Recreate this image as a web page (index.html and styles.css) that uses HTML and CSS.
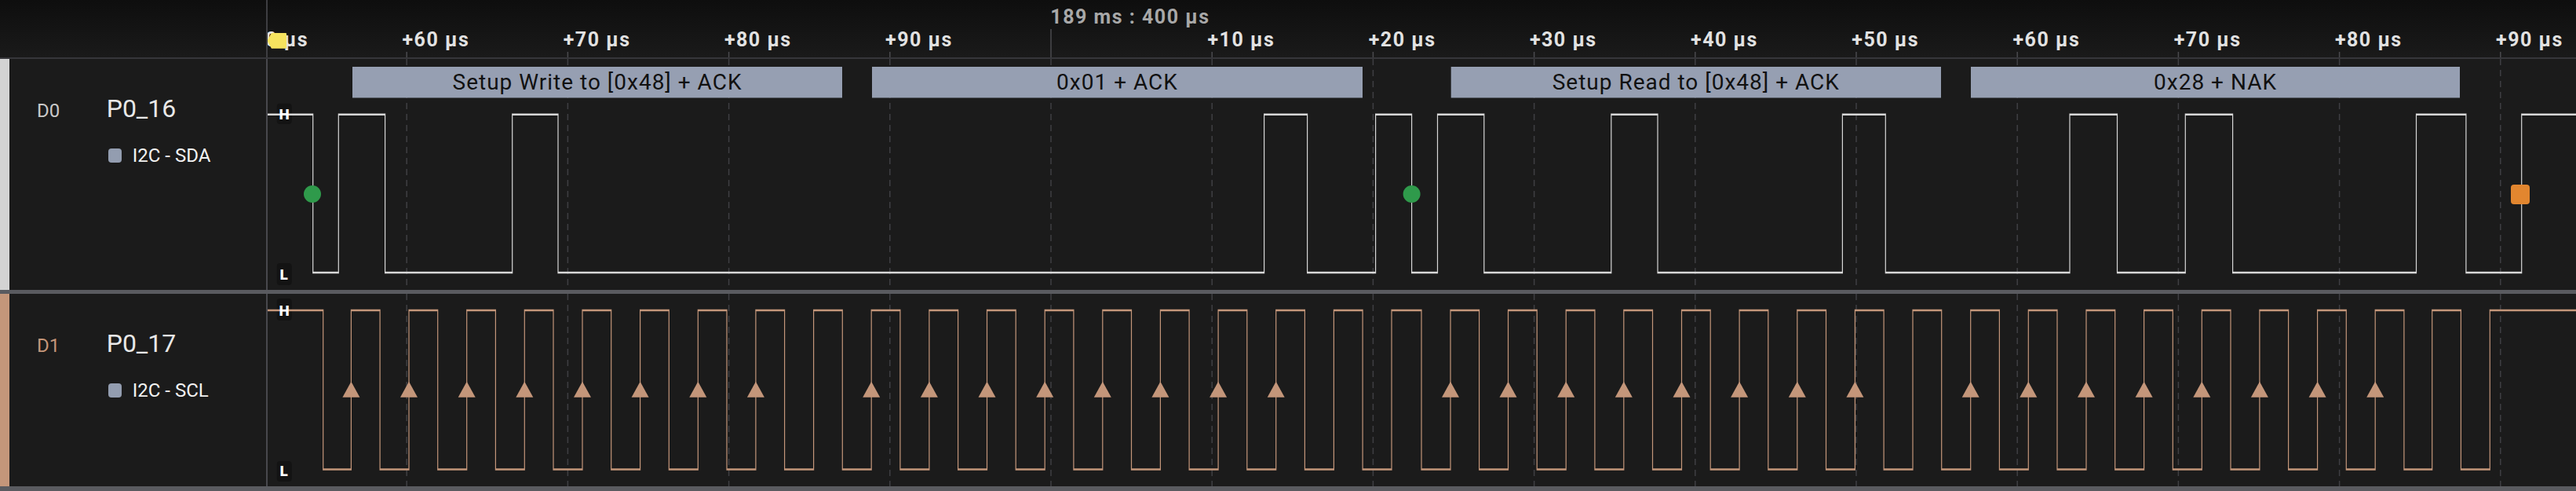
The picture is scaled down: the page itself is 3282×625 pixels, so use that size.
FILE: index.html
```html
<!DOCTYPE html>
<html lang="en">
<head>
<meta charset="utf-8">
<title>Logic analyzer – I2C</title>
<link rel="stylesheet" href="styles.css">
</head>
<body>
<div class="scope">
  <div class="header">
    <div class="corner"></div>
    <svg class="ruler" width="2941" height="73" viewBox="341 0 2941 73">
      <path class="ticks" d="M518.2 66V73M723.4 66V73M928.6 66V73M1133.8 66V73M1544.2 66V73M1749.4 66V73M1954.6 66V73M2159.8 66V73M2365 66V73M2570.2 66V73M2775.4 66V73M2980.6 66V73M3185.8 66V73"/>
      <path class="ticks" d="M1339 37V73"/>
      <text class="tick-label" x="307.3" y="59.3">+50 µs</text>
      <text class="tick-label" x="512.5" y="59.3">+60 µs</text>
      <text class="tick-label" x="717.7" y="59.3">+70 µs</text>
      <text class="tick-label" x="922.9" y="59.3">+80 µs</text>
      <text class="tick-label" x="1128.1" y="59.3">+90 µs</text>
      <text class="tick-major" x="1338.3" y="30">189 ms : 400 µs</text>
      <text class="tick-label" x="1538.5" y="59.3">+10 µs</text>
      <text class="tick-label" x="1743.7" y="59.3">+20 µs</text>
      <text class="tick-label" x="1948.9" y="59.3">+30 µs</text>
      <text class="tick-label" x="2154.1" y="59.3">+40 µs</text>
      <text class="tick-label" x="2359.3" y="59.3">+50 µs</text>
      <text class="tick-label" x="2564.5" y="59.3">+60 µs</text>
      <text class="tick-label" x="2769.7" y="59.3">+70 µs</text>
      <text class="tick-label" x="2974.9" y="59.3">+80 µs</text>
      <text class="tick-label" x="3180.1" y="59.3">+90 µs</text>
      <polygon class="cursor-flag" points="341.5,51.8 346.5,43 364,43 364,60.7 346.5,60.7"/>
    </svg>
  </div>

  <div class="row row-d0">
    <div class="info">
      <div class="stripe stripe-d0"></div>
      <div class="info-body">
        <div class="chan chan-d0">D0</div>
        <div class="names">
          <div class="name">P0_16</div>
          <div class="analyzer"><span class="badge"></span><span class="analyzer-name">I2C - SDA</span></div>
        </div>
      </div>
    </div>
    <svg class="trace" width="2941" height="294" viewBox="341 75 2941 294">
      <path class="grid" d="M518.2 75V369M723.4 75V369M928.6 75V369M1133.8 75V369M1339 75V369M1544.2 75V369M1749.4 75V369M1954.6 75V369M2159.8 75V369M2365 75V369M2570.2 75V369M2775.4 75V369M2980.6 75V369M3185.8 75V369"/>
      <rect class="frame" x="449" y="85" width="624" height="39.5"/>
      <rect class="frame" x="1111" y="85" width="625" height="39.5"/>
      <rect class="frame" x="1848.7" y="85" width="624.3" height="39.5"/>
      <rect class="frame" x="2511" y="85" width="623" height="39.5"/>
      <text class="frame-text" x="761" y="114.3">Setup Write to [0x48] + ACK</text>
      <text class="frame-text" x="1423.5" y="114.3">0x01 + ACK</text>
      <text class="frame-text" x="2160.8" y="114.3">Setup Read to [0x48] + ACK</text>
      <text class="frame-text" x="2822.5" y="114.3">0x28 + NAK</text>
      <rect class="level-box" x="352.7" y="131.7" width="19" height="26.3" rx="4"/>
      <rect class="level-box" x="352.7" y="335" width="19" height="28" rx="4"/>
      <g transform="scale(1 2)">
        <path class="wave wave-sda" d="M341 72.85H398.7V173.5H431.3V72.85H490.6V173.5H652.7V72.85H711V173.5H1610.6V72.85H1665.6V173.5H1752.6V72.85H1798.6V173.5H1831.5V72.85H1890.8V173.5H2052.8V72.85H2112V173.5H2347.4V72.85H2402.3V173.5H2637V72.85H2697.5V173.5H2784.3V72.85H2844.6V173.5H3078.5V72.85H3141.9V173.5H3212.7V72.85H3282"/>
      </g>
      <text class="level" x="362.2" y="151.7">H</text>
      <text class="level" x="361.5" y="356">L</text>
      <circle class="start" cx="398" cy="247" r="11"/>
      <circle class="start" cx="1798.6" cy="247" r="11"/>
      <rect class="stop" x="3199" y="235" width="24" height="25" rx="4"/>
    </svg>
  </div>

  <div class="row row-d1">
    <div class="info">
      <div class="stripe stripe-d1"></div>
      <div class="info-body">
        <div class="chan chan-d1">D1</div>
        <div class="names">
          <div class="name">P0_17</div>
          <div class="analyzer"><span class="badge"></span><span class="analyzer-name">I2C - SCL</span></div>
        </div>
      </div>
    </div>
    <svg class="trace" width="2941" height="245" viewBox="341 374 2941 245">
      <defs>
        <path id="edge-arrow" d="M0 0L11 20H-11Z"/>
      </defs>
      <path class="grid" d="M518.2 374V619M723.4 374V619M928.6 374V619M1133.8 374V619M1339 374V619M1544.2 374V619M1749.4 374V619M1954.6 374V619M2159.8 374V619M2365 374V619M2570.2 374V619M2775.4 374V619M2980.6 374V619M3185.8 374V619"/>
      <rect class="level-box" x="352.7" y="380" width="19" height="28" rx="4"/>
      <rect class="level-box" x="352.7" y="587" width="19" height="26" rx="4"/>
      <g transform="scale(1 2)">
        <path class="wave wave-scl" d="M341 197.5H411.7V298.75H447.4V197.5H484.1V298.75H521V197.5H557.7V298.75H594.7V197.5H631.4V298.75H668.3V197.5H705V298.75H742V197.5H778.7V298.75H815.6V197.5H852.3V298.75H889.3V197.5H926V298.75H962.9V197.5H999.6V298.75H1036.6V197.5H1073.3V298.75H1110.2V197.5H1146.9V298.75H1183.9V197.5H1220.6V298.75H1257.5V197.5H1294.2V298.75H1331.2V197.5H1367.9V298.75H1404.8V197.5H1441.5V298.75H1478.4V197.5H1515.1V298.75H1552.1V197.5H1588.8V298.75H1625.7V197.5H1662.4V298.75H1699.4V197.5H1736.1V298.75H1773V197.5H1811V298.75H1848V197.5H1884.6V298.75H1921.5V197.5H1958.2V298.75H1995.2V197.5H2031.9V298.75H2068.8V197.5H2105.5V298.75H2142.5V197.5H2179.2V298.75H2216.1V197.5H2252.8V298.75H2289.8V197.5H2326.5V298.75H2363.4V197.5H2400.1V298.75H2437V197.5H2473.7V298.75H2510.7V197.5H2547.4V298.75H2584.3V197.5H2621V298.75H2658V197.5H2694.7V298.75H2731.6V197.5H2768.3V298.75H2805.3V197.5H2842V298.75H2878.9V197.5H2915.6V298.75H2952.6V197.5H2989.3V298.75H3026.2V197.5H3062.9V298.75H3098.7V197.5H3135.4V298.75H3172.3V197.5H3282"/>
      </g>
      <g class="arrows">
        <use href="#edge-arrow" x="447.4" y="485.7"/>
        <use href="#edge-arrow" x="521" y="485.7"/>
        <use href="#edge-arrow" x="594.7" y="485.7"/>
        <use href="#edge-arrow" x="668.3" y="485.7"/>
        <use href="#edge-arrow" x="742" y="485.7"/>
        <use href="#edge-arrow" x="815.6" y="485.7"/>
        <use href="#edge-arrow" x="889.3" y="485.7"/>
        <use href="#edge-arrow" x="962.9" y="485.7"/>
        <use href="#edge-arrow" x="1110.2" y="485.7"/>
        <use href="#edge-arrow" x="1183.9" y="485.7"/>
        <use href="#edge-arrow" x="1257.5" y="485.7"/>
        <use href="#edge-arrow" x="1331.2" y="485.7"/>
        <use href="#edge-arrow" x="1404.8" y="485.7"/>
        <use href="#edge-arrow" x="1478.4" y="485.7"/>
        <use href="#edge-arrow" x="1552.1" y="485.7"/>
        <use href="#edge-arrow" x="1625.7" y="485.7"/>
        <use href="#edge-arrow" x="1848" y="485.7"/>
        <use href="#edge-arrow" x="1921.5" y="485.7"/>
        <use href="#edge-arrow" x="1995.2" y="485.7"/>
        <use href="#edge-arrow" x="2068.8" y="485.7"/>
        <use href="#edge-arrow" x="2142.5" y="485.7"/>
        <use href="#edge-arrow" x="2216.1" y="485.7"/>
        <use href="#edge-arrow" x="2289.8" y="485.7"/>
        <use href="#edge-arrow" x="2363.4" y="485.7"/>
        <use href="#edge-arrow" x="2510.7" y="485.7"/>
        <use href="#edge-arrow" x="2584.3" y="485.7"/>
        <use href="#edge-arrow" x="2658" y="485.7"/>
        <use href="#edge-arrow" x="2731.6" y="485.7"/>
        <use href="#edge-arrow" x="2805.3" y="485.7"/>
        <use href="#edge-arrow" x="2878.9" y="485.7"/>
        <use href="#edge-arrow" x="2952.6" y="485.7"/>
        <use href="#edge-arrow" x="3026.2" y="485.7"/>
      </g>
      <text class="level" x="362.2" y="401.5">H</text>
      <text class="level" x="361.5" y="605.7">L</text>
    </svg>
  </div>
</div>
</body>
</html>
```

FILE: styles.css
```css
html, body {
  margin: 0;
  padding: 0;
  background: #1b1b1b;
}

body {
  width: 3282px;
  height: 625px;
  overflow: hidden;
  font-family: Roboto, "Liberation Sans", Arial, sans-serif;
}

.scope {
  display: flex;
  flex-direction: column;
  width: 3282px;
}

.header {
  display: flex;
  height: 73px;
  border-bottom: 2px solid #36363a;
  background: linear-gradient(to bottom, #0e0e0e, #1a1a1a);
}

.corner {
  box-sizing: border-box;
  width: 341px;
  flex: none;
  border-right: 2px solid #3e3e42;
}

.ruler,
.trace {
  display: block;
  flex: none;
}

.ticks {
  stroke: #4a4a4e;
  stroke-width: 1.5;
  fill: none;
}

.tick-label {
  font-family: Roboto, "Liberation Sans", sans-serif;
  font-weight: 700;
  font-size: 25px;
  letter-spacing: 1.5px;
  fill: #e2e2e2;
}

.tick-major {
  font-family: Roboto, "Liberation Sans", sans-serif;
  font-weight: 700;
  font-size: 25px;
  letter-spacing: 1.5px;
  fill: #a8a8a8;
}

.cursor-flag {
  fill: #f6e35f;
  stroke: #f6e35f;
  stroke-width: 2;
  stroke-linejoin: round;
}

.row {
  display: flex;
  background: #1b1b1b;
}

.row-d0 {
  height: 294px;
  border-bottom: 5px solid #5a5b60;
}

.row-d1 {
  height: 245px;
  border-bottom: 6px solid #5a5b60;
}

.info {
  box-sizing: border-box;
  width: 341px;
  flex: none;
  display: flex;
  border-right: 2px solid #48484d;
}

.stripe {
  width: 12px;
  flex: none;
}

.stripe-d0 {
  background: #d3d3d3;
}

.stripe-d1 {
  background: #c4967a;
}

.info-body {
  display: flex;
  align-items: baseline;
  padding: 47px 0 0 35px;
}

.chan {
  width: 88.7px;
  font-size: 24px;
  line-height: 24px;
}

.chan-d0 {
  color: #c9c9c9;
}

.chan-d1 {
  color: #c4967a;
}

.names {
  display: flex;
  flex-direction: column;
}

.name {
  font-size: 32px;
  line-height: 32px;
  color: #e8e8e8;
}

.analyzer {
  display: flex;
  align-items: center;
  margin-top: 31.8px;
  height: 24px;
}

.badge {
  width: 17px;
  height: 18px;
  margin-left: 2.6px;
  margin-right: 13.5px;
  border-radius: 4px;
  background: #939db0;
}

.analyzer-name {
  font-size: 24px;
  line-height: 24px;
  color: #f2f2f2;
}

.grid {
  fill: none;
  stroke: #3f3f43;
  stroke-width: 1.5;
  stroke-dasharray: 8 6;
}

.frame {
  fill: #969fb2;
}

.frame-text {
  font-family: Roboto, "Liberation Sans", sans-serif;
  font-size: 28px;
  letter-spacing: 1px;
  fill: #111111;
  text-anchor: middle;
}

.level-box {
  fill: #101010;
  opacity: 0.7;
}

.level {
  font-family: "DejaVu Sans", Roboto, sans-serif;
  font-weight: 700;
  font-size: 17px;
  fill: #ffffff;
  text-anchor: middle;
}

.wave {
  fill: none;
  stroke-width: 1.2;
  stroke-linejoin: miter;
}

.wave-sda {
  stroke: #d8d8d8;
}

.wave-scl {
  stroke: #c4967a;
}

.arrows {
  fill: #c4967a;
}

.start {
  fill: #2f9a4b;
}

.stop {
  fill: #e2862f;
}
```
